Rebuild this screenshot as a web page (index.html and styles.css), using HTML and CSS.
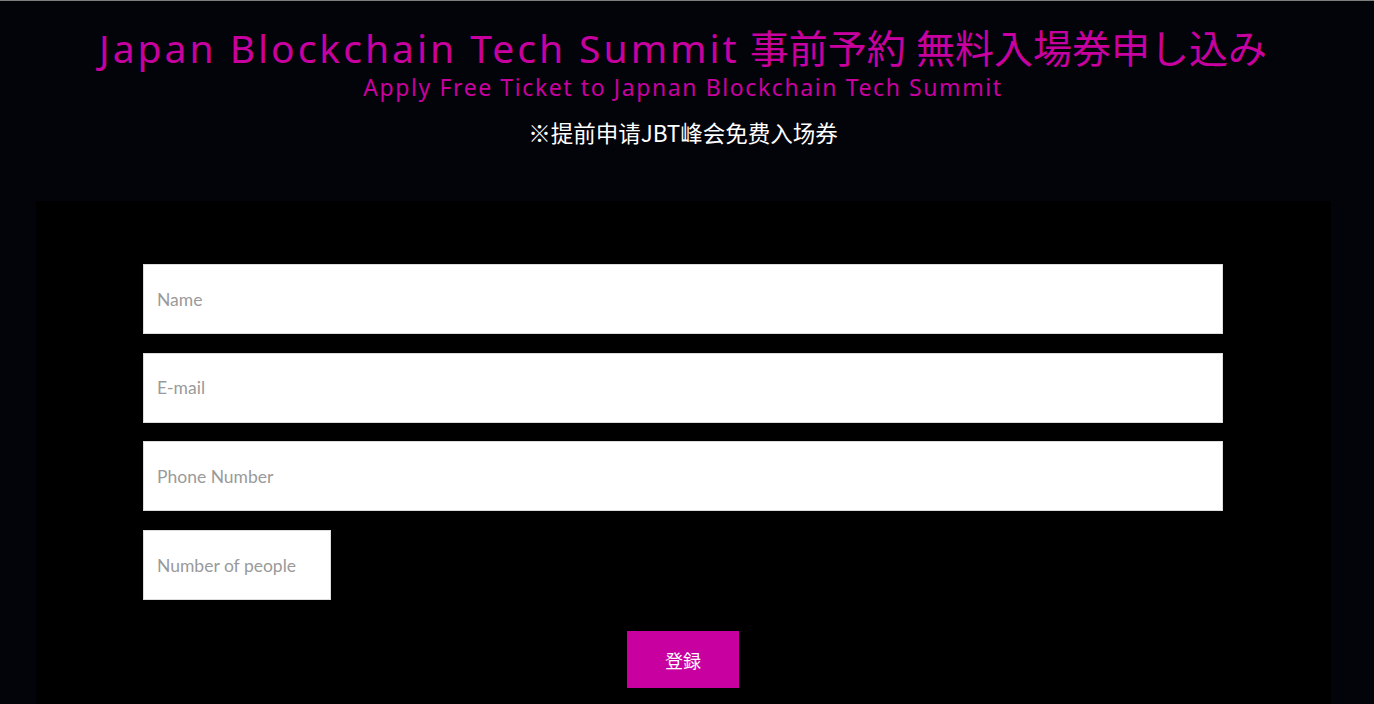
FILE: index.html
```html
<!DOCTYPE html>
<html>
<head>
  <title>Japan Blockchain Tech Summit</title>
  <meta charset="UTF-8">
  <link rel="stylesheet" href="styles.css">
</head>
<body>
  <div class="page">
    <header class="head">
      <h1 class="title"><span class="title-en">Japan Blockchain Tech Summit</span> 事前予約 無料入場券申し込み</h1>
      <p class="subtitle">Apply Free Ticket to Japnan Blockchain Tech Summit</p>
      <p class="note">※提前申请JBT峰会免费入场券</p>
    </header>

    <!-- entry form -->
    <div class="panel">
      <form class="form">
        <input type="text" class="field" placeholder="Name">
        <input type="text" class="field" placeholder="E-mail">
        <input type="text" class="field" placeholder="Phone Number">
        <input type="text" class="field field-small" placeholder="Number of people">
        <button type="button" class="btn-submit">登録</button>
      </form>
    </div>
  </div>
</body>
</html>
```

FILE: styles.css
```css
:root {
  --bg: #03030a;
  --panel-bg: #000;
  --accent: #c800a0;
  --white: #fff;
  --placeholder: #9a9a9a;
  --field-border: #dcdcdc;
}
html, body { margin: 0; padding: 0; }
body {
  background-color: var(--bg);
  border-top: 1px solid #7d7d7d;
  font-family: "Noto Sans", "Noto Sans CJK JP", sans-serif;
  color: var(--white);
  height: 703px;
  overflow: hidden;
}
.page { width: 1366px; }
.head { text-align: center; padding-top: 25px; }
.title { margin: 0; font-weight: 400; font-size: 39px; line-height: 44px; color: var(--accent); }
.title-en { letter-spacing: 3px; }
.subtitle { margin: 0; font-size: 23px; line-height: 34px; color: var(--accent); letter-spacing: 1.6px; }
.note { margin: 0; padding-top: 14px; font-family: "Noto Sans CJK SC", sans-serif; font-size: 22.5px; line-height: 28px; }
.panel { margin: 55px 0 0 36px; width: 1295px; height: 503px; background-color: var(--panel-bg); padding: 63px 0 0 107px; box-sizing: border-box; }
.form { width: 1080px; display: flex; flex-direction: column; align-items: flex-start; }
.field { width: 1080px; height: 70px; box-sizing: border-box; margin: 0 0 18.7px 0; padding: 0 13px; border: 1px solid var(--field-border); background-color: var(--white); font-family: Lato, "Noto Sans", sans-serif; font-size: 17.5px; color: #333; outline: none; }
.field::placeholder { color: var(--placeholder); }
.field-small { width: 188px; margin-bottom: 31px; }
.btn-submit { align-self: center; width: 112px; height: 57px; border: none; background-color: var(--accent); color: var(--white); font-family: "Noto Sans CJK JP", sans-serif; font-size: 18px; cursor: pointer; }
```
